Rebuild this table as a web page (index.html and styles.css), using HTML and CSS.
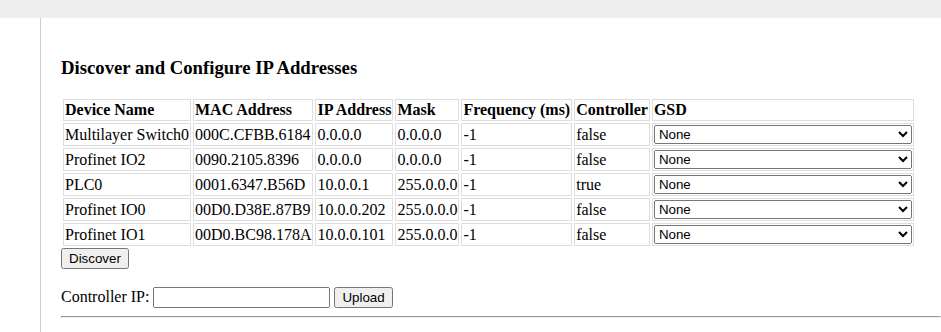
FILE: index.html
```html
<!DOCTYPE html>
<html>
<head>
  <meta charset="UTF-8">
  <title>IP Configuration</title>
  <link rel="stylesheet" href="styles.css">
</head>
<body>
  <div class="topbar"></div>
  <div class="layout">
    <div class="sidebar"></div>
    <div class="content">
      <h3>Discover and Configure IP Addresses</h3>

      <table class="devices">
        <tr>
          <th>Device Name</th>
          <th>MAC Address</th>
          <th>IP Address</th>
          <th>Mask</th>
          <th>Frequency (ms)</th>
          <th>Controller</th>
          <th>GSD</th>
        </tr>
        <tr>
          <td>Multilayer Switch0</td>
          <td>000C.CFBB.6184</td>
          <td>0.0.0.0</td>
          <td>0.0.0.0</td>
          <td>-1</td>
          <td>false</td>
          <td><select class="gsd"><option>None</option></select></td>
        </tr>
        <tr>
          <td>Profinet IO2</td>
          <td>0090.2105.8396</td>
          <td>0.0.0.0</td>
          <td>0.0.0.0</td>
          <td>-1</td>
          <td>false</td>
          <td><select class="gsd"><option>None</option></select></td>
        </tr>
        <tr>
          <td>PLC0</td>
          <td>0001.6347.B56D</td>
          <td>10.0.0.1</td>
          <td>255.0.0.0</td>
          <td>-1</td>
          <td>true</td>
          <td><select class="gsd"><option>None</option></select></td>
        </tr>
        <tr>
          <td>Profinet IO0</td>
          <td>00D0.D38E.87B9</td>
          <td>10.0.0.202</td>
          <td>255.0.0.0</td>
          <td>-1</td>
          <td>false</td>
          <td><select class="gsd"><option>None</option></select></td>
        </tr>
        <tr>
          <td>Profinet IO1</td>
          <td>00D0.BC98.178A</td>
          <td>10.0.0.101</td>
          <td>255.0.0.0</td>
          <td>-1</td>
          <td>false</td>
          <td><select class="gsd"><option>None</option></select></td>
        </tr>
      </table>
      <button type="button">Discover</button>

      <form class="upload-form">
        Controller IP: <input type="text" id="controller-ip">
        <button type="submit">Upload</button>
      </form>
      <hr>
    </div>
  </div>
</body>
</html>
```

FILE: styles.css
```css
body {
  margin: 0;
  font-family: "Liberation Serif", "Times New Roman", serif;
  font-size: 16px;
  color: #000;
  background-color: #fff;
}

/* grey strip along the top */
.topbar {
  height: 18px;
  background-color: #eeeeee;
}

.layout {
  display: flex;
  min-height: 314px;
}

.sidebar {
  width: 40px;
  flex-shrink: 0;
  border-right: 1px solid #cccccc;
}

.content {
  flex: 1;
  padding: 20px 0 0 20px;
}

h3 {
  font-size: 1.17em;
  margin: 18.72px 0;
}

/* device table */
.devices {
  border-spacing: 2px;
}
.devices th,
.devices td {
  border: 1px solid #dddddd;
  padding: 1px;
  text-align: left;
  white-space: nowrap;
}

select,
input,
button {
  font-family: "Liberation Sans", Arial, sans-serif;
  font-size: 13.33px;
}

.gsd {
  width: 258px;
}

.upload-form {
  margin-top: 18px;
}

#controller-ip {
  box-sizing: border-box;
  width: 177px;
}

hr {
  margin: 8px 0 0 0;
}
```
